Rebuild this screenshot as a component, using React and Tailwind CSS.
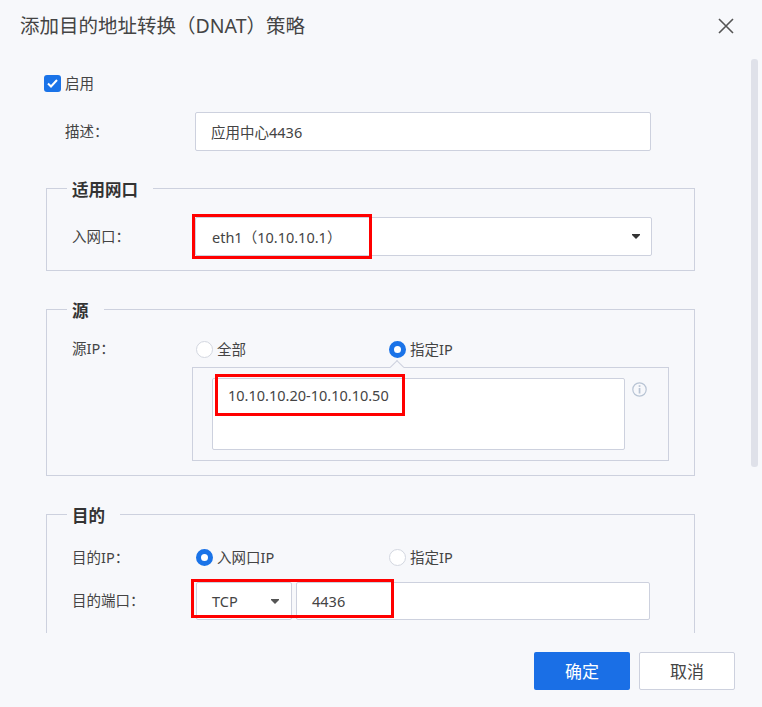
const fontStack = { fontFamily: '"Noto Sans", "Noto Sans CJK SC", sans-serif' };

function Arrow({ className }) {
  return (
    <svg className={className} width="8" height="5" viewBox="0 0 8 5">
      <path d="M0 0H8V1L4 5L0 1Z" fill="currentColor" />
    </svg>
  );
}

function Radio({ checked, label, className = '' }) {
  return (
    <div className={`flex items-center gap-1 ${className}`}>
      {checked ? (
        <span className="w-[17px] h-[17px] rounded-full border-[5px] border-[#1a73e8] bg-white" />
      ) : (
        <span className="w-[17px] h-[17px] rounded-full border border-[#d3d7e0] bg-white" />
      )}
      <span className="text-[14.5px] text-[#444] leading-[17px]">{label}</span>
    </div>
  );
}

function Group({ title, children, className = '' }) {
  return (
    <fieldset className={`w-[649px] border border-[#cdd1de] pl-[25px] ${className}`}>
      <legend className="-ml-[5px] pl-[5px] pr-[15px] pt-[4px] text-[16.5px] leading-[22px] font-bold text-[#333]">
        {title}
      </legend>
      {children}
    </fieldset>
  );
}

function RedBox({ className }) {
  return <div className={`absolute border-[3px] border-[#ff0000] pointer-events-none ${className}`} />;
}

export default function App() {
  return (
    <div style={fontStack} className="relative w-[762px] h-[707px] bg-[#f7f8fb] flex flex-col overflow-hidden">
      <div className="h-[52px] shrink-0 flex items-center justify-between pl-5 pr-[28px]">
        <h1 className="text-[19.5px] font-normal text-[#444]">添加目的地址转换（DNAT）策略</h1>
        <svg width="16" height="16" viewBox="0 0 16 16" className="text-[#555]">
          <path d="M1 1L15 15M15 1L1 15" stroke="currentColor" strokeWidth="1.6" fill="none" />
        </svg>
      </div>

      <div className="relative h-[581px] shrink-0 overflow-hidden pl-[46px] pt-[23px]">
        <div className="flex items-center gap-1 h-[17px] -ml-[2px]">
          <span className="w-[17px] h-[17px] rounded-[3px] bg-[#1a73e8] flex items-center justify-center">
            <svg width="11" height="9" viewBox="0 0 11 9">
              <path d="M1 4.5L4 7.5L10 1" stroke="#fff" strokeWidth="2" fill="none" />
            </svg>
          </span>
          <span className="text-[14.5px] leading-5 pb-[2px] text-[#444]">启用</span>
        </div>

        <div className="flex items-center mt-5 ml-[19px]">
          <span className="w-[130px] text-[14.5px] leading-5 pb-[1px] text-[#444]">描述：</span>
          <div className="w-[456px] h-[39px] flex items-center pl-[15px] bg-white border border-[#cdd1de] rounded-[2px] text-[14.5px] leading-5 text-[#444]">
            应用中心4436
          </div>
        </div>

        <Group title="适用网口" className="mt-[24px] pb-[14px]">
          <div className="flex items-center mt-[16px]">
            <span className="w-[123px] text-[14.5px] leading-5 pb-[2px] text-[#444]">入网口：</span>
            <div className="relative w-[457px] h-[39px] flex items-center justify-between pl-[16px] pr-[11px] bg-white border border-[#cdd1de] rounded-[2px] text-[14.5px] leading-5 text-[#444]">
              <span>eth1（10.10.10.1）</span>
              <Arrow className="text-[#333]" />
              <RedBox className="-left-[4px] -top-[4px] w-[180px] h-[45px]" />
            </div>
          </div>
        </Group>

        <Group title="源" className="mt-[25px] pb-[14px]">
          <div className="flex items-start mt-[19px]">
            <span className="w-[124px] text-[14.5px] text-[#444] leading-[17px] -mt-[1px]">源IP：</span>
            <Radio label="全部" className="w-[193px]" />
            <Radio checked label="指定IP" />
          </div>
          <div className="relative ml-[120px] mt-[9px] w-[477px] h-[94px] border border-[#cdd1de] pl-[19px] pt-[10px] flex gap-[7px]">
            <span className="absolute -top-[6px] left-[199px] w-[10px] h-[10px] rotate-45 bg-[#f7f8fb] border-l border-t border-[#cdd1de]" />
            <div className="relative w-[413px] h-[72px] bg-white border border-[#cdd1de] rounded-[2px] pl-[15px] pt-[6px] text-[14.5px] leading-5 text-[#444]">
              10.10.10.20-10.10.10.50
              <RedBox className="left-[2px] -top-[5px] w-[190px] h-[42px]" />
            </div>
            <svg width="15" height="15" viewBox="0 0 15 15" className="mt-[4px] text-[#b8c4d4]">
              <circle cx="7.5" cy="7.5" r="6.7" stroke="currentColor" strokeWidth="1.2" fill="none" />
              <rect x="6.7" y="3.2" width="1.7" height="1.7" fill="currentColor" />
              <rect x="6.7" y="6" width="1.7" height="5.5" fill="currentColor" />
            </svg>
          </div>
        </Group>

        <Group title="目的" className="mt-[25px] h-[140px]">
          <div className="flex items-start mt-[22px]">
            <span className="w-[124px] text-[14.5px] text-[#444] leading-[17px]">目的IP：</span>
            <Radio checked label="入网口IP" className="w-[193px]" />
            <Radio label="指定IP" />
          </div>
          <div className="flex items-center mt-[16px]">
            <span className="w-[124px] text-[14.5px] leading-5 pb-[2px] text-[#444]">目的端口：</span>
            <div className="relative flex gap-1 text-[14.5px] leading-5 text-[#444]">
              <div className="w-[96px] h-[38px] flex items-center justify-between pl-[15px] pr-[12px] bg-white border border-[#cdd1de] rounded-[2px]">
                <span>TCP</span>
                <Arrow className="text-[#555]" />
              </div>
              <div className="w-[354px] h-[38px] flex items-center pl-[15px] bg-white border border-[#cdd1de] rounded-[2px]">
                4436
              </div>
              <RedBox className="-left-[5px] -top-[3px] w-[203px] h-[39px]" />
            </div>
          </div>
          <div className="ml-[127px] mt-[13px] w-[15px] h-[16px] rounded-[2px] bg-[#1a73e8]" />
        </Group>
      </div>

      <div className="flex-1 flex justify-end items-start gap-[9px] pt-[19px] pr-[27px] text-[17px]">
        <button className="w-[96px] h-[38px] pt-[1px] rounded-[2px] bg-[#1a6fe6] text-white">确定</button>
        <button className="w-[96px] h-[38px] pt-[1px] rounded-[2px] bg-white border border-[#cdd1de] text-[#444]">取消</button>
      </div>

      <div className="absolute left-[751px] top-[59px] w-[7px] h-[408px] rounded-[3px] bg-[#dfe1e9]" />
    </div>
  );
}
